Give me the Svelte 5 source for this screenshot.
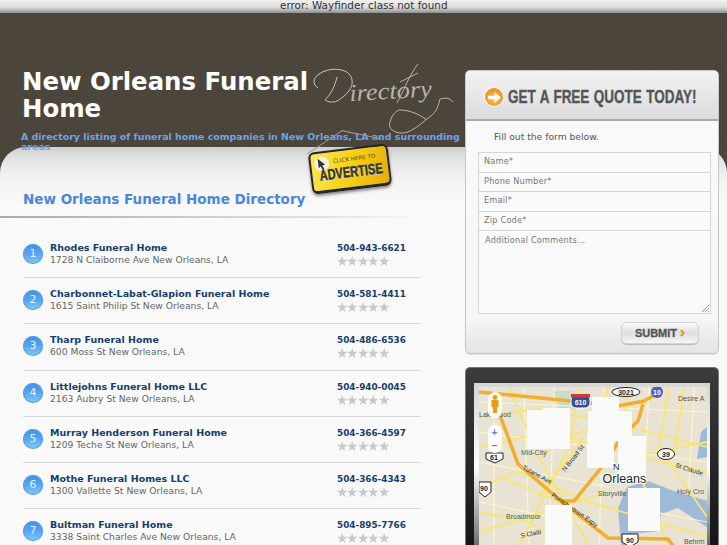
<script>
  const homes = [
    { name: 'Rhodes Funeral Home', addr: '1728 N Claiborne Ave New Orleans, LA', phone: '504-943-6621' },
    { name: 'Charbonnet-Labat-Glapion Funeral Home', addr: '1615 Saint Philip St New Orleans, LA', phone: '504-581-4411' },
    { name: 'Tharp Funeral Home', addr: '600 Moss St New Orleans, LA', phone: '504-486-6536' },
    { name: 'Littlejohns Funeral Home LLC', addr: '2163 Aubry St New Orleans, LA', phone: '504-940-0045' },
    { name: 'Murray Henderson Funeral Home', addr: '1209 Teche St New Orleans, LA', phone: '504-366-4597' },
    { name: 'Mothe Funeral Homes LLC', addr: '1300 Vallette St New Orleans, LA', phone: '504-366-4343' },
    { name: 'Bultman Funeral Home', addr: '3338 Saint Charles Ave New Orleans, LA', phone: '504-895-7766' }
  ];
  const fields = ['Name*', 'Phone Number*', 'Email*', 'Zip Code*'];
  const starPts = '5,0 6.3,3.6 10,3.7 7,6 8.1,9.6 5,7.5 1.9,9.6 3,6 0,3.7 3.7,3.6';

  const blanks = [
    [48, 23, 34, 39], [64, 21, 27, 41], [113, 10, 27, 31], [109, 24, 44, 30],
    [108, 47, 27, 34], [139, 49, 28, 40], [149, 101, 32, 43], [66, 118, 27, 41]
  ];
  const streets = [
    'M0 30 L60 22 L130 35 L228 60', 'M0 60 L70 45 L160 70 L228 85', 'M0 100 L40 85 L110 115 L228 150',
    'M30 0 L60 70 L110 159', 'M100 0 L90 60 L40 159', 'M150 0 L145 50 L190 159', 'M190 0 L180 60 L228 130',
    'M0 125 L50 135 L90 159', 'M205 0 L195 70', 'M60 70 L110 40 L130 0', 'M0 145 L80 120 L130 105',
    'M60 110 L105 50', 'M20 90 L70 110 L95 125', 'M150 70 L228 55'
  ];
  const minor = [
    'M0 15 L228 25', 'M0 45 L228 75', 'M0 75 L130 100', 'M0 115 L120 140', 'M15 0 L15 159', 'M45 0 L50 159',
    'M75 0 L70 159', 'M125 0 L120 159', 'M170 0 L165 100', 'M215 0 L210 100', 'M150 120 L228 135'
  ];
</script>

<div class="page">
  <div class="errbar">error: Wayfinder class not found</div>

  <div class="wrap">
    <div class="sheet"></div>

    <div class="left">
      <header class="hero">
        <h1>New Orleans Funeral Home</h1>
        <p>A directory listing of funeral home companies in New Orleans, LA and surrounding areas</p>
        <span class="script">irectory</span>
        <svg class="flourish" viewBox="0 0 150 90" width="150" height="90">
          <path d="M7 24 C1 20 2 14 8 10 C18 3 34 4 39 11 C45 20 38 30 26 37 C22 39 17 38 14 36 M26 13 C24 22 20 30 14 36"
            fill="none" stroke="#c9c5bf" stroke-width="1" />
          <path d="M107 0 C100 8 92 28 86 39 M89 18 L107 9 M142 38 C138 33 133 34 129 35 C127 44 124 50 117 54 C108 62 98 70 89 69 C80 68 77 62 79 58 C81 50 86 46 89 46 C98 46 108 50 116 56"
            fill="none" stroke="#b9b5af" stroke-width="1" />
        </svg>
      </header>

      <a class="advert" href="#advertise">
        <svg class="strings" viewBox="0 0 90 20" width="90" height="20">
          <path d="M2 20 L40 1 L78 14" fill="none" stroke="#9b968e" stroke-width="1" />
        </svg>
        <span class="cursor">
          <svg viewBox="0 0 10 14" width="9" height="12"><path d="M1 0 L9 8 L5.5 8 L7.5 13 L5.5 14 L3.5 9 L1 11 Z" fill="#333" /></svg>
        </span>
        <span class="click">CLICK HERE TO</span>
        <span class="adv">ADVERTISE</span>
      </a>

      <main class="list">
        <h2>New Orleans Funeral Home Directory</h2>
        <ul>
          {#each homes as home, i}
            <li>
              <span class="num">{i + 1}</span>
              <div class="info">
                <strong>{home.name}</strong>
                <span>{home.addr}</span>
              </div>
              <div class="contact">
                <strong>{home.phone}</strong>
                <span class="stars">
                  {#each [0, 1, 2, 3, 4] as s (s)}
                    <svg viewBox="0 0 10 10" width="10.4" height="10.4"><polygon points={starPts} fill="#c9c9c9" /></svg>
                  {/each}
                </span>
              </div>
            </li>
          {/each}
        </ul>
      </main>
    </div>

    <aside class="side">
      <section class="quote">
        <div class="quote-head">
          <span class="arrow">
            <svg viewBox="0 0 14 12" width="13" height="11"><path d="M0 4 H7 V0 L14 6 L7 12 V8 H0 Z" fill="#fff" /></svg>
          </span>
          <span class="quote-title">GET A FREE QUOTE TODAY!</span>
        </div>
        <p class="fill">Fill out the form below.</p>
        <form class="fields">
          {#each fields as f}
            <div class="field">{f}</div>
          {/each}
          <div class="field comments">Additional Comments...
            <svg class="grip" viewBox="0 0 8 8" width="8" height="8"><path d="M1 8 L8 1 M4 8 L8 4 M7 8 L8 7" stroke="#999" /></svg>
          </div>
        </form>
        <div class="submit-row">
          <button type="button" class="submit">SUBMIT <i>›</i></button>
        </div>
      </section>

      <section class="device">
        <div class="screen">
          <svg class="map" viewBox="0 0 228 160" width="228" height="160">
            <rect width="228" height="160" fill="#e9e3d3" />
            <path d="M148 100 L169 94 L195 104 L229 114 V141 L199 121 L182 127 L179 144 L152 147 V160 H142 L139 121 Z" fill="#9fb9d9" />
            <path d="M222 45 L228 40 V70 L218 72 Z" fill="#9fb9d9" />
            <path d="M75 4 H95 V22 H80 Z" fill="#c9dccb" />
            {#each minor as d}
              <path {d} fill="none" stroke="#fdf6c8" stroke-width="1.2" />
            {/each}
            {#each streets as d}
              <path {d} fill="none" stroke="#f7e66f" stroke-width="1.8" />
            {/each}
            <path d="M0 5 L92 14 L139 19 L165 14 L174 9 M164 17 L159 34 L145 47 L122 81 L95 114 L82 114 L39 77 L22 31 L18 14 M82 114 L129 151 L189 152 L195 160"
              fill="none" stroke="#f2ad2c" stroke-width="3.5" />

            <g class="labels">
              <text x="199" y="14">Desire A</text>
              <text x="0" y="30">Lakewood</text>
              <text x="42" y="68">Mid-City</text>
              <text x="43" y="82" transform="rotate(28 43 82)" class="b">Tulane Ave</text>
              <text x="86" y="85" transform="rotate(-52 86 85)" class="b">N Broad St</text>
              <text x="119" y="109">Storyville</text>
              <text x="198" y="107">Holy Cro</text>
              <text x="196" y="80" transform="rotate(18 196 80)" class="b">St Claude</text>
              <text x="27" y="132">Broadmoor</text>
              <text x="42" y="151" transform="rotate(-12 42 151)" class="b">S Claib</text>
              <text x="72" y="109" transform="rotate(35 72 109)" class="b">Pontchartrain Expy</text>
              <text x="205" y="157">Behrm</text>
            </g>

            <g class="shield">
              <rect x="92" y="8" width="19" height="13" rx="5" fill="#2f4f9f" stroke="#fff" />
              <rect x="92" y="7" width="19" height="3.5" fill="#cc3a33" />
              <text x="101.5" y="18" fill="#fff">610</text>
              <ellipse cx="147" cy="5" rx="14" ry="4.5" fill="#fff" stroke="#222" />
              <text x="147" y="8" fill="#222">3021</text>
              <circle cx="178" cy="5" r="6" fill="#4a5fc0" />
              <text x="178" y="8" fill="#fff">10</text>
              <ellipse cx="187" cy="67" rx="8.5" ry="5.5" fill="#fff" stroke="#222" />
              <text x="187" y="70" fill="#222">39</text>
              <path d="M0 95 H12 V105 L6 110 L0 105 Z" fill="#fff" stroke="#222" />
              <text x="5" y="104" fill="#222">90</text>
              <path d="M7 66 H24 V72 L16 76 L7 72 Z" fill="#fff" stroke="#222" />
              <text x="15" y="73" fill="#222">61</text>
              <path d="M143 147 H159 V155 L151 160 L143 155 Z" fill="#fff" stroke="#222" />
              <text x="151" y="156" fill="#222">90</text>
            </g>

            {#each blanks as b}
              <rect x={b[0]} y={b[1]} width={b[2]} height={b[3]} fill="#fafafa" />
            {/each}

            <text x="123.5" y="96" class="city">Orleans</text>
            <text x="134" y="83" class="city small">N</text>

            <g class="ctrl">
              <rect x="9" y="5" width="14" height="26" rx="7" fill="#fff" opacity=".9" />
              <circle cx="16" cy="10.5" r="2.4" fill="#e89b14" />
              <path d="M12.5 13 H19.5 V20 H18 V26 H14 V20 H12.5 Z" fill="#e89b14" />
              <rect x="9" y="38" width="14" height="28" rx="7" fill="#fff" opacity=".9" />
              <text x="15.5" y="49" class="zoom">+</text>
              <text x="15.5" y="62" class="zoom">−</text>
            </g>
          </svg>
        </div>
      </section>
    </aside>
  </div>
</div>

<style>
  :global(html), :global(body) {
    margin: 0;
    overflow: hidden;
  }

  .page {
    width: 727px;
    height: 545px;
    overflow: hidden;
    font-family: "DejaVu Sans", Verdana, sans-serif;
    background: #f9f9f9;
  }

  .errbar {
    height: 13px;
    line-height: 10px;
    padding-left: 280px;
    font-size: 10.45px;
    color: #333;
    background: linear-gradient(#f0f0f0 0, #dcdcdc 55%, #8f8f8f 100%);
    white-space: nowrap;
  }

  .wrap {
    position: relative;
    display: flex;
    height: 532px;
    background: #4a443a;
    background-image: repeating-linear-gradient(45deg, rgba(255,255,255,.02) 0 1px, transparent 1px 3px);
  }

  .sheet {
    position: absolute;
    left: 0;
    right: 0;
    top: 134px;
    bottom: 0;
    border-radius: 26px 26px 0 0;
    background: linear-gradient(#cfcfcf 0, #e6e6e6 14px, #f5f5f5 36px, #f9f9f9 60px);
  }

  .left {
    position: relative;
    width: 465px;
    flex: none;
  }

  .hero {
    position: relative;
    height: 134px;
    padding: 55px 0 0 22px;
    box-sizing: border-box;
    color: #fff;
  }

  h1 {
    margin: 0;
    font-size: 24.4px;
    line-height: 27px;
    font-weight: 700;
    width: 300px;
    position: relative;
  }

  .hero p {
    margin: 10px 0 0 -1px;
    width: 445px;
    font-size: 9.43px;
    line-height: 10px;
    font-weight: 700;
    color: #6fa2ea;
    position: relative;
    z-index: 2;
  }

  .script {
    position: absolute;
    left: 350px;
    top: 65px;
    font-family: "Liberation Serif", serif;
    font-style: italic;
    font-size: 24px;
    line-height: 30px;
    color: #b7b3ac;
    transform: rotate(-3deg) scaleX(1.1);
    transform-origin: left bottom;
  }

  .flourish {
    position: absolute;
    left: 311px;
    top: 51px;
  }

  .advert {
    position: absolute;
    left: 310px;
    top: 135px;
    width: 76px;
    height: 37px;
    border-radius: 6px;
    border: 2px solid #262626;
    border-bottom-width: 3px;
    background: linear-gradient(110deg, #fde84a, #f6cf12 55%, #e3ac08);
    transform: rotate(-7deg);
    text-decoration: none;
    box-shadow: 0 2px 3px rgba(0,0,0,.45);
    z-index: 3;
  }

  .strings {
    position: absolute;
    left: -5px;
    top: -21px;
  }

  .cursor {
    position: absolute;
    left: 3px;
    top: 3px;
    width: 15px;
    height: 15px;
    border-radius: 50%;
    background: #f6f2d6;
    display: flex;
    align-items: center;
    justify-content: center;
  }

  .click {
    position: absolute;
    left: 22px;
    top: 6px;
    font-size: 5.6px;
    color: #5a4a10;
    white-space: nowrap;
  }

  .adv {
    position: absolute;
    left: 7px;
    top: 13px;
    font-family: "Liberation Sans", sans-serif;
    font-size: 15px;
    font-weight: 700;
    color: #333;
    -webkit-text-stroke: .4px #333;
    text-shadow: 0 1px 0 #ddd;
    transform: scaleX(.74);
    transform-origin: left;
    white-space: nowrap;
  }

  .list {
    position: relative;
    padding: 0 44px 0 23px;
  }

  h2 {
    margin: 0 0 0 -23px;
    padding: 44px 0 10px 23px;
    font-size: 13.5px;
    line-height: 17px;
    font-weight: 700;
    color: #4a86dc;
    background: linear-gradient(90deg, #aaa, #e8e8e8 85%, transparent) bottom / 100% 2px no-repeat;
  }

  ul {
    list-style: none;
    margin: 14px 0 0;
    padding: 0;
  }

  li {
    display: flex;
    align-items: flex-start;
    padding-top: 10px;
    height: 35.2px;
    border-bottom: 1px solid #d9d9d9;
    font-size: 9.2px;
  }

  .num {
    flex: none;
    width: 20px;
    height: 20px;
    margin: 2px 7px 0 0;
    border-radius: 50%;
    background: linear-gradient(#3f8fe8 0, #5aa8f4 55%, #86cbfc 100%);
    box-shadow: inset 0 0 0 1px #5a9fe6;
    color: #e8f4ff;
    font-size: 11px;
    line-height: 19px;
    text-align: center;
  }

  .info, .contact {
    display: flex;
    flex-direction: column;
  }

  .info {
    flex: 1;
  }

  .info strong, .contact strong {
    font-size: 9.5px;
    line-height: 12px;
    font-weight: 700;
    color: #163e6c;
    white-space: nowrap;
  }

  .contact strong {
    font-size: 8.85px;
  }

  .info span {
    line-height: 12px;
    color: #666;
  }

  .contact {
    width: 84px;
    margin-left: 1px;
  }

  .stars {
    display: flex;
    height: 11px;
    margin-top: 2px;
  }

  .stars svg {
    display: block;
  }

  .side {
    position: relative;
    width: 254px;
    margin-top: 57px;
  }

  .quote {
    height: 284px;
    box-sizing: border-box;
    border: 1px solid #c8c8c8;
    border-radius: 5px;
    background: linear-gradient(#fafafa 0, #f6f6f6 88%, #e3e3e3 100%);
    box-shadow: 0 1px 1px rgba(0,0,0,.1);
  }

  .quote-head {
    display: flex;
    align-items: center;
    gap: 5px;
    height: 50px;
    padding: 4px 0 0 19px;
    box-sizing: border-box;
    border-radius: 4px 4px 0 0;
    background: linear-gradient(#f2f2f2, #dcdcde);
    border-bottom: 2px solid #aaa;
  }

  .arrow {
    flex: none;
    width: 18px;
    height: 18px;
    border-radius: 50%;
    background: radial-gradient(circle at 50% 60%, #fcc24a, #ee7c12);
    box-shadow: 0 0 0 1px #fff;
    display: flex;
    align-items: center;
    justify-content: center;
  }

  .quote-title {
    font-family: "Liberation Sans", sans-serif;
    font-size: 19px;
    font-weight: 700;
    color: #555557;
    -webkit-text-stroke: .4px #555557;
    white-space: nowrap;
    transform: scaleX(.71);
    transform-origin: left;
    word-spacing: 1px;
  }

  .fill {
    margin: 9px 0 9px 28px;
    font-size: 9.2px;
    line-height: 13px;
    color: #555;
  }

  .fields {
    display: flex;
    flex-direction: column;
    margin: 0 7px 0 12px;
    border: 1px solid #d5d5d5;
  }

  .field {
    position: relative;
    height: 18.6px;
    border-bottom: 1px solid #d5d5d5;
    padding-left: 5px;
    font-size: 8.2px;
    line-height: 17px;
    letter-spacing: .2px;
    color: #777;
    background: #fafafa;
  }

  .comments {
    height: 82px;
    border-bottom: 0;
    padding-left: 6px;
    line-height: 19px;
  }

  .grip {
    position: absolute;
    right: 1px;
    bottom: 1px;
  }

  .submit-row {
    display: flex;
    justify-content: flex-end;
    padding: 8px 19px 0 0;
  }

  .submit {
    width: 78px;
    height: 22px;
    border: 1px solid #d2d2d2;
    border-radius: 6px;
    background: linear-gradient(#fafafa, #dedede 50%, #f6f6f6);
    box-shadow: 0 1px 1px rgba(0,0,0,.2);
    font-family: "Liberation Sans", sans-serif;
    font-size: 11px;
    font-weight: 700;
    color: #555;
    -webkit-text-stroke: .3px #555;
    padding: 0;
  }

  .submit i {
    color: #e8901c;
    -webkit-text-stroke: .5px #e8901c;
    font-style: normal;
    font-size: 15px;
    line-height: 10px;
  }

  .device {
    margin-top: 13px;
    height: 200px;
    padding: 15px 8px 0;
    border-radius: 5px 5px 0 0;
    box-sizing: border-box;
    background: linear-gradient(#3c3c3c, #333 20%, #111 100%);
    border: 1px solid #777;
    border-bottom: 0;
  }

  .screen {
    height: 185px;
    padding: 4px 4px 0 5px;
    box-sizing: border-box;
    background: linear-gradient(#d5d5d5, #fff 45%, #444 100%);
  }

  .map {
    display: block;
  }

  .labels text {
    font-family: "Liberation Sans", sans-serif;
    font-size: 7px;
    fill: #555;
  }

  .labels text.b {
    fill: #333;
    font-size: 6.5px;
  }

  .city {
    font-family: "Liberation Sans", sans-serif;
    font-size: 12.5px;
    fill: #222;
    paint-order: stroke;
    stroke: #fff;
    stroke-width: 2px;
  }

  .city.small {
    font-size: 9px;
  }

  .shield text {
    font-family: "Liberation Sans", sans-serif;
    font-size: 7px;
    font-weight: 700;
    text-anchor: middle;
  }

  .zoom {
    font-family: "Liberation Sans", sans-serif;
    font-size: 10px;
    font-weight: 700;
    text-anchor: middle;
    fill: #5a80d8;
  }
</style>
